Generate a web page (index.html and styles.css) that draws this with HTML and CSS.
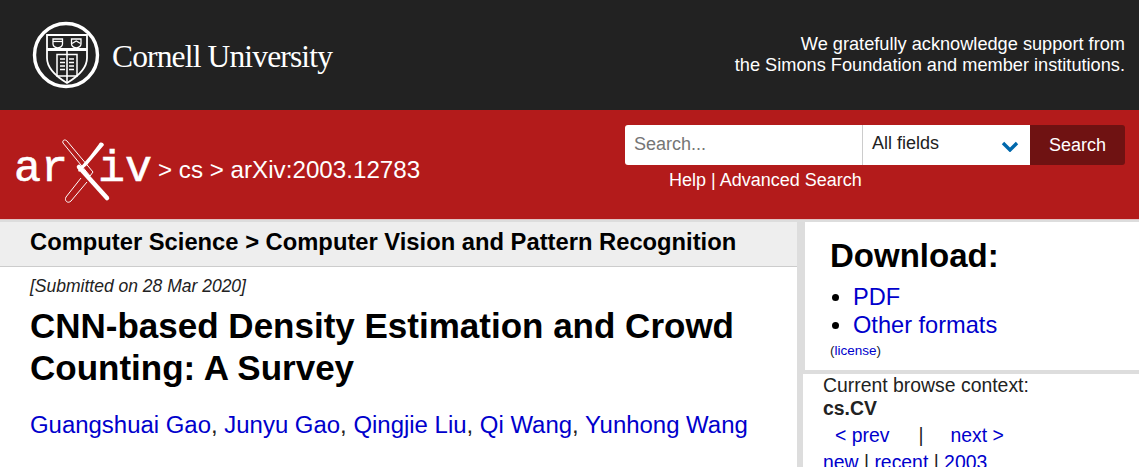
FILE: index.html
```html
<!DOCTYPE html>
<html lang="en">
<head>
<meta charset="utf-8">
<title>CNN-based Density Estimation and Crowd Counting: A Survey</title>
<link rel="stylesheet" href="styles.css">
</head>
<body>
<header class="cornell">
  <div class="cornell-logo">
    <svg class="seal" width="68" height="68" viewBox="0 0 68 68" fill="none" stroke="#fff">
      <circle cx="34" cy="34" r="31.5" stroke-width="3.4"/>
      <path d="M15 14H55V37C55 48 45 56 35 62C25 56 15 48 15 37Z" stroke-width="1.8"/>
      <path d="M15 28.500H55" stroke-width="3"/>
      <path d="M35 28.500V62" stroke-width="1.6"/>
      <path d="M21 18H30.500V23C30.500 25 28 26.500 25.750 27C23.500 26.500 21 25 21 23Z" stroke-width="1.3"/>
      <path d="M21 20.500H30.500" stroke-width="1.200"/>
      <path d="M39.500 18H49V23C49 25 46.500 26.500 44.250 27C42 26.500 39.500 25 39.500 23Z" stroke-width="1.300"/>
      <path d="M40 22.500L44.250 20L48.500 22.500" stroke-width="1.300"/>
      <path d="M25 33.500H45V55H25Z" stroke-width="1.500"/>
      <path d="M28 38H33M28 41.500H33M28 45H33M28 48.500H33M37 38H42M37 41.500H42M37 45H42M37 48.500H42" stroke-width="1.600"/>
    </svg>
    <span class="cornell-name">Cornell University</span>
  </div>
  <p class="thanks">We gratefully acknowledge support from<br>the Simons Foundation and member institutions.</p>
</header>
<section class="redbar">
  <div class="crumbs">
    <span class="arxiv-logo">
      <span class="logo-letters">ar</span>
      <svg class="logo-x" width="56" height="72" viewBox="0 0 56 72" fill="none">
        <path d="M3 8C2 5 5 4 7 6L33 37L30 41Z" stroke="#fff" stroke-width="1"/>
        <path d="M21 43L6 62C4 66 8 69 11 66L27 47" stroke="#fff" stroke-width="1"/>
        <path d="M19 32L47 63" stroke="#fff" stroke-width="4.500" stroke-linecap="round"/>
        <path d="M39 9C40 7 43 7 44 10L27 30L19 37L18 35L30 21Z" fill="#fff"/>
      </svg>
      <span class="logo-letters logo-iv">iv</span>
    </span>
    <span class="trail">&gt; cs &gt; arXiv:2003.12783</span>
  </div>
  <div class="search">
    <div class="search-row">
      <div class="search-input">Search...</div>
      <div class="search-select">All fields
        <svg width="18" height="11" viewBox="0 0 18 11" fill="none"><path d="M2 2L9 9L16 2" stroke="#0068ac" stroke-width="3.400"/></svg>
      </div>
      <div class="search-btn">Search</div>
    </div>
    <div class="search-links"><a href="#">Help</a> | <a href="#">Advanced Search</a></div>
  </div>
</section>
<main class="content">
  <article class="paper">
    <div class="subject">Computer Science &gt; Computer Vision and Pattern Recognition</div>
    <div class="paper-body">
      <p class="dateline">[Submitted on 28 Mar 2020]</p>
      <h1 class="title">CNN-based Density Estimation and Crowd Counting: A Survey</h1>
      <p class="authors"><a href="#">Guangshuai Gao</a>, <a href="#">Junyu Gao</a>, <a href="#">Qingjie Liu</a>, <a href="#">Qi Wang</a>, <a href="#">Yunhong Wang</a></p>
    </div>
  </article>
  <aside class="side">
    <div class="download">
      <h2>Download:</h2>
      <ul>
        <li><a href="#">PDF</a></li>
        <li><a href="#">Other formats</a></li>
      </ul>
      <p class="license">(<a href="#">license</a>)</p>
    </div>
    <div class="browse">
      <div class="browse-label">Current browse context:</div>
      <div class="browse-cat">cs.CV</div>
      <div class="browse-nav"><a href="#">&lt; prev</a><span class="sep">|</span><a href="#">next &gt;</a></div>
      <div class="browse-list"><a href="#">new</a> | <a href="#">recent</a> | <a href="#">2003</a></div>
    </div>
  </aside>
</main>
</body>
</html>
```
FILE: styles.css
```css
* { box-sizing: border-box; }
html, body { margin: 0; height: 467px; overflow: hidden; }
body { font-family: "Liberation Sans", Arial, sans-serif; background: #fff; color: #000; }
a { color: #0000cc; text-decoration: none; }
p, h1, h2, ul { margin: 0; padding: 0; }

.cornell { height: 110px; background: #222; display: flex; justify-content: space-between; align-items: center; padding: 0 14px 0 32px; color: #fff; }
.cornell-logo { display: flex; align-items: center; gap: 12px; }
.seal { display: block; }
.cornell-name { font-family: "Liberation Serif", serif; font-size: 31.5px; letter-spacing: -0.85px; position: relative; top: 2px; }
.thanks { font-size: 18.2px; line-height: 21px; text-align: right; }

.redbar { height: 110px; background: #b31b1b; border-bottom: 1px solid #e0c4c4; display: flex; justify-content: space-between; color: #fff; padding: 15px 14px 0 14px; }
.crumbs { display: flex; align-items: center; height: 88px; }
.arxiv-logo { display: flex; align-items: center; width: 137px; position: relative; height: 72px; }
.logo-letters { font-family: "Liberation Mono", monospace; font-size: 45px; line-height: 1; -webkit-text-stroke: 0.6px #fff; }
.logo-x { position: absolute; left: 46px; top: 2px; }
.logo-iv { position: absolute; left: 84px; }
.trail { font-size: 24.200px; margin-left: 7px; position: relative; top: 1px; }

.search { width: 500px; }
.search-row { display: flex; height: 40px; font-size: 18px; }
.search-input { width: 237px; background: #fff; color: #757575; border-radius: 3px 0 0 3px; padding: 9px 9px; }
.search-select { width: 168px; background: #fff; color: #222; border-left: 1px solid #ccc; padding: 8px 9px; display: flex; justify-content: space-between; align-items: flex-start; }
.search-select svg { margin-top: 8px; margin-right: 2px; }
.search-btn { width: 95px; background: #6f1212; border-radius: 0 3px 3px 0; text-align: center; padding-top: 10px; }
.search-links { font-size: 18px; padding: 5px 0 0 44px; }
.search-links a { color: #fff; }

.content { display: flex; border-top: 2px solid #ddd; }
.paper { width: 797px; flex: none; }
.subject { height: 45px; background: #eee; border-bottom: 1px solid #ccc; font-size: 23.750px; font-weight: bold; padding: 6px 0 0 30px; }
.paper-body { padding: 9px 30px 0; }
.dateline { font-size: 17.500px; font-style: italic; color: #222; }
.title { font-size: 35px; line-height: 42px; margin-top: 8px; }
.authors { font-size: 23.950px; margin-top: 22px; color: #222; }

.side { flex: 1; border-left: 6px solid #ddd; }
.download { height: 152px; padding: 14px 0 0 25px; border-left: 2px solid #ddd; border-bottom: 4px solid #ddd; }
.download h2 { font-size: 33px; line-height: 40px; }
.download ul { font-size: 23.600px; line-height: 28px; margin-top: 7px; padding-left: 23px; }
.license { font-size: 13.500px; color: #222; margin-top: 4px; }
.browse { padding: 0 0 0 20px; font-size: 19.400px; color: #222; line-height: 22px; }
.browse-cat { font-weight: bold; padding-top: 1px; }
.browse-nav { padding: 5px 0 0 12px; }
.browse-nav .sep { margin: 0 27px 0 29px; color: #222; }
.browse-list { padding-top: 5px; }
```
